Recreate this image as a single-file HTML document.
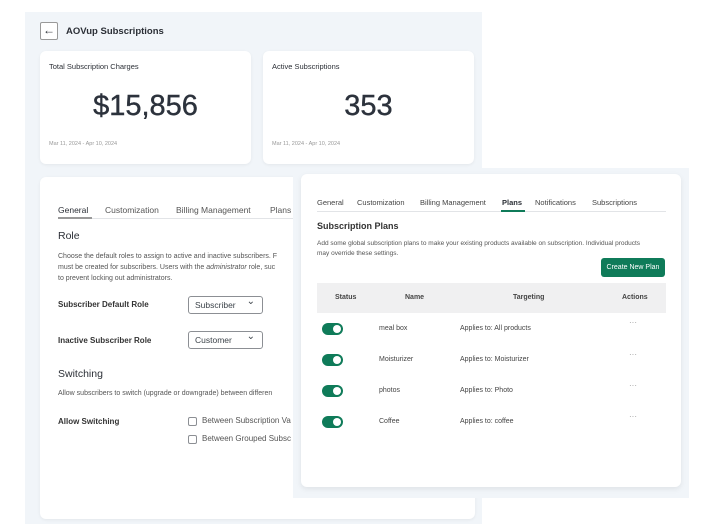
<!DOCTYPE html>
<html><head><style>
*{margin:0;padding:0;box-sizing:border-box}
body{width:708px;height:524px;background:#fff;font-family:"Liberation Sans",sans-serif;color:#2b2f36;position:relative;overflow:hidden}
.a{position:absolute}
.bg{left:25px;top:12px;width:457px;height:512px;background:#f1f5f9}
.card{background:#fff;border-radius:6px;box-shadow:0 1px 3px rgba(0,0,0,.06)}
.t{position:absolute;white-space:nowrap}
.tog{position:absolute;width:21px;height:12px;border-radius:6px;background:#0f7b59}
.tog:after{content:"";position:absolute;right:2px;top:2px;width:8px;height:8px;border-radius:50%;background:#fff}
.sel{position:absolute;width:75px;height:18px;border:1px solid #8c8f94;border-radius:3px;font-size:8.5px;padding:3px 0 0 6px;color:#3c434a}
.sel:after{content:"⌄";position:absolute;right:7px;top:-1px;font-size:10px}
.cb{position:absolute;width:9px;height:9px;border:1px solid #8c8f94;border-radius:2px}
</style></head><body>
<div class="a bg"></div>
<div class="a" style="left:40px;top:22px;width:18px;height:18px;border:1px solid #999;border-radius:2px;background:#fff;font-size:12px;text-align:center;line-height:15px">←</div>
<div class="t" style="left:66px;top:26px;font-size:9.5px;font-weight:bold">AOVup Subscriptions</div>
<div class="a card" style="left:40px;top:51px;width:211px;height:113px"></div>
<div class="a card" style="left:263px;top:51px;width:211px;height:113px"></div>
<div class="t" style="left:49px;top:62px;font-size:7.5px">Total Subscription Charges</div>
<div class="t" style="left:272px;top:62px;font-size:7.5px">Active Subscriptions</div>
<div class="t" style="left:40px;width:211px;text-align:center;top:90px;font-size:29px;color:#2c323c;-webkit-text-stroke:0.4px #2c323c">$15,856</div>
<div class="t" style="left:263px;width:211px;text-align:center;top:90px;font-size:29px;color:#2c323c;-webkit-text-stroke:0.4px #2c323c">353</div>
<div class="t" style="left:49px;top:141px;font-size:5.5px;color:#999">Mar 11, 2024 - Apr 10, 2024</div>
<div class="t" style="left:272px;top:141px;font-size:5.5px;color:#999">Mar 11, 2024 - Apr 10, 2024</div>
<div class="a card" style="left:40px;top:177px;width:435px;height:342px"></div>
<div class="a" style="left:58px;top:218px;width:240px;height:1px;background:#e2e4e7"></div>
<div class="a" style="left:58px;top:217px;width:34px;height:2px;background:#999"></div>
<div class="t" style="left:58px;top:205px;font-size:8.5px">General</div>
<div class="t" style="left:105px;top:205px;font-size:8.5px;color:#555">Customization</div>
<div class="t" style="left:176px;top:205px;font-size:8.5px;color:#555">Billing Management</div>
<div class="t" style="left:270px;top:205px;font-size:8.5px;color:#555">Plans</div>
<div class="t" style="left:58px;top:230px;font-size:10.5px">Role</div>
<div class="t" style="left:58px;top:251px;font-size:7px;line-height:11px;color:#555">Choose the default roles to assign to active and inactive subscribers. F<br>must be created for subscribers. Users with the <i>administrator</i> role, suc<br>to prevent locking out administrators.</div>
<div class="t" style="left:58px;top:300px;font-size:8px;font-weight:bold;color:#333">Subscriber Default Role</div>
<div class="sel" style="left:188px;top:296px">Subscriber</div>
<div class="t" style="left:58px;top:336px;font-size:8px;font-weight:bold;color:#333">Inactive Subscriber Role</div>
<div class="sel" style="left:188px;top:331px">Customer</div>
<div class="t" style="left:58px;top:368px;font-size:10.5px">Switching</div>
<div class="t" style="left:58px;top:390px;font-size:7px;color:#555">Allow subscribers to switch (upgrade or downgrade) between differen</div>
<div class="t" style="left:58px;top:417px;font-size:8px;font-weight:bold;color:#333">Allow Switching</div>
<div class="cb" style="left:188px;top:417px"></div>
<div class="t" style="left:202px;top:416px;font-size:8px;color:#555">Between Subscription Va</div>
<div class="cb" style="left:188px;top:435px"></div>
<div class="t" style="left:202px;top:434px;font-size:8px;color:#555">Between Grouped Subsc</div>

<div class="a" style="left:293px;top:168px;width:396px;height:330px;background:#f1f5f9"></div>
<div class="a card" style="left:301px;top:174px;width:380px;height:313px;box-shadow:0 2px 6px rgba(0,0,0,.08)"></div>
<div class="a" style="left:317px;top:211px;width:349px;height:1px;background:#e2e4e7"></div>
<div class="a" style="left:501px;top:210px;width:24px;height:2px;background:#0f7b59"></div>
<div class="t" style="left:317px;top:198px;font-size:7.5px;color:#444">General</div>
<div class="t" style="left:357px;top:198px;font-size:7.5px;color:#444">Customization</div>
<div class="t" style="left:420px;top:198px;font-size:7.5px;color:#444">Billing Management</div>
<div class="t" style="left:502px;top:198px;font-size:7.5px;font-weight:bold">Plans</div>
<div class="t" style="left:535px;top:198px;font-size:7.5px;color:#444">Notifications</div>
<div class="t" style="left:592px;top:198px;font-size:7.5px;color:#444">Subscriptions</div>
<div class="t" style="left:317px;top:221px;font-size:9px;font-weight:bold;color:#333">Subscription Plans</div>
<div class="t" style="left:317px;top:239px;font-size:6.5px;line-height:10px;color:#555">Add some global subscription plans to make your existing products available on subscription. Individual products<br>may override these settings.</div>
<div class="a" style="left:601px;top:258px;width:64px;height:19px;background:#0f7b59;border-radius:3px;color:#fff;font-size:7px;text-align:center;line-height:19px">Create New Plan</div>
<div class="a" style="left:317px;top:283px;width:349px;height:30px;background:#f0f0f1"></div>
<div class="t" style="left:335px;top:294px;font-size:7px;font-weight:bold;color:#444">Status</div>
<div class="t" style="left:405px;top:294px;font-size:7px;font-weight:bold;color:#444">Name</div>
<div class="t" style="left:513px;top:294px;font-size:7px;font-weight:bold;color:#444">Targeting</div>
<div class="t" style="left:622px;top:294px;font-size:7px;font-weight:bold;color:#444">Actions</div>

<div class="tog" style="left:322px;top:323px"></div>
<div class="t" style="left:379px;top:325px;font-size:7px;color:#444">meal box</div>
<div class="t" style="left:460px;top:325px;font-size:7px;color:#444">Applies to: All products</div>
<div class="t" style="left:629px;top:318px;font-size:8px;color:#999">···</div>

<div class="tog" style="left:322px;top:354px"></div>
<div class="t" style="left:379px;top:356px;font-size:7px;color:#444">Moisturizer</div>
<div class="t" style="left:460px;top:356px;font-size:7px;color:#444">Applies to: Moisturizer</div>
<div class="t" style="left:629px;top:350px;font-size:8px;color:#999">···</div>

<div class="tog" style="left:322px;top:385px"></div>
<div class="t" style="left:379px;top:387px;font-size:7px;color:#444">photos</div>
<div class="t" style="left:460px;top:387px;font-size:7px;color:#444">Applies to: Photo</div>
<div class="t" style="left:629px;top:381px;font-size:8px;color:#999">···</div>

<div class="tog" style="left:322px;top:416px"></div>
<div class="t" style="left:379px;top:418px;font-size:7px;color:#444">Coffee</div>
<div class="t" style="left:460px;top:418px;font-size:7px;color:#444">Applies to: coffee</div>
<div class="t" style="left:629px;top:412px;font-size:8px;color:#999">···</div>
</body></html>
